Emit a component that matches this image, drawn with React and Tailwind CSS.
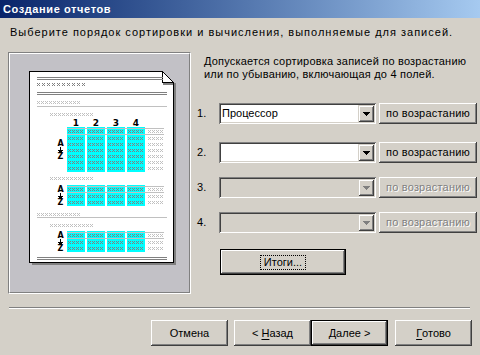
import React from "react";

const raised =
  "shadow-[inset_-1px_-1px_#404040,inset_1px_1px_#ffffff,inset_-2px_-2px_#808080,inset_2px_2px_#d4d0c8]";
const raisedDefault =
  "shadow-[inset_0_0_0_1px_#000000,inset_-2px_-2px_#404040,inset_2px_2px_#ffffff,inset_-3px_-3px_#808080,inset_3px_3px_#d4d0c8]";
const sunken =
  "shadow-[inset_1px_1px_#808080,inset_-1px_-1px_#ffffff,inset_2px_2px_#404040,inset_-2px_-2px_#d4d0c8]";
const ddBtn =
  "shadow-[inset_1px_1px_#d4d0c8,inset_-1px_-1px_#404040,inset_2px_2px_#ffffff,inset_-2px_-2px_#808080]";

function glyphs(x0, y0, n, pitch) {
  let d = "";
  for (let i = 0; i < n; i++) {
    const x = x0 + i * pitch;
    d += `M${x} ${y0}h1v1h-1zM${x + 2} ${y0}h1v1h-1zM${x + 1} ${y0 + 1}h1v1h-1zM${x} ${y0 + 2}h1v1h-1zM${x + 2} ${y0 + 2}h1v1h-1z`;
  }
  return d;
}

function Preview() {
  const cols = [67, 87, 107, 127];
  let dark = "";
  let light = "";
  let cyanX = "";
  const lines = [];
  const cyanRects = [];
  const icons = [];
  dark += glyphs(37, 83, 10, 5);
  light += glyphs(37, 101, 11, 4);
  light += glyphs(50, 113, 11, 4);
  light += glyphs(50, 177, 11, 4);
  light += glyphs(37, 213, 11, 4);
  light += glyphs(50, 224, 11, 4);
  const groups = [
    [127, 6],
    [185, 2],
    [231, 2],
  ];
  groups.forEach(([T, n]) => {
    const bottom = T + 14 + 6 * (n - 1);
    cols.forEach((cx) =>
      cyanRects.push({ x: cx, y: T, w: 18, h: bottom - T + 1 })
    );
    const rows = [T + 3];
    for (let k = 0; k < n; k++) rows.push(T + 10 + 6 * k);
    rows.forEach((ry) => {
      cols.forEach((cx) => {
        cyanX += glyphs(cx + 1, ry, 4, 4);
      });
      light += glyphs(148, ry, 4, 4);
    });
    lines.push({ x: 67, y: T + 1, w: 97, c: "#c0c0c0" });
    lines.push({ x: 67, y: T + 7, w: 97, c: "#c0c0c0" });
    icons.push(Math.round((T + bottom) / 2 - 9.5));
  });

  const darkLines = [
    { x: 37, y: 77, w: 126 },
    { x: 37, y: 79, w: 126 },
    { x: 37, y: 92, w: 130 },
    { x: 37, y: 94, w: 130 },
    { x: 37, y: 257, w: 130 },
    { x: 37, y: 259, w: 130 },
  ];
  const lightLines = [
    { x: 37, y: 106, w: 130 },
    { x: 37, y: 217, w: 130 },
  ];

  return (
    <svg
      width="179"
      height="238"
      viewBox="10 54 179 238"
      className="block"
    >
      <g shapeRendering="crispEdges">
        <rect x="174" y="83" width="2" height="182" fill="#808080" />
        <rect x="32" y="263" width="144" height="2" fill="#808080" />
        <path
          d="M29.5 71.5H162.5L173.5 82.5V262.5H29.5Z"
          fill="#ffffff"
          stroke="#000000"
          strokeWidth="1"
        />
        <rect x="163" y="83" width="10" height="2" fill="#808080" />
        <path
          d="M162.5 71.5V82.5H173.5Z"
          fill="#ffffff"
          stroke="#000000"
          strokeWidth="1"
        />
        {darkLines.map((l, i) => (
          <rect key={"d" + i} x={l.x} y={l.y} width={l.w} height="1" fill="#808080" />
        ))}
        {lightLines.map((l, i) => (
          <rect key={"l" + i} x={l.x} y={l.y} width={l.w} height="1" fill="#c0c0c0" />
        ))}
        {cyanRects.map((r, i) => (
          <rect key={"c" + i} x={r.x} y={r.y} width={r.w} height={r.h} fill="#00ffff" />
        ))}
        {lines.map((l, i) => (
          <rect key={"g" + i} x={l.x} y={l.y} width={l.w} height="1" fill={l.c} />
        ))}
        <path d={dark} fill="#808080" />
        <path d={light} fill="#c0c0c0" />
        <path d={cyanX} fill="#808080" />
        {icons.map((top, i) => (
          <g key={"i" + i}>
            <rect x="60" y={top + 7} width="1" height="4" fill="#000" />
            <path
              d={`M58 ${top + 10}h5v1h-1v1h-1v1h-1v-1h-1v-1h-1z`}
              fill="#000"
            />
          </g>
        ))}
      </g>
      {icons.map((top, i) => (
        <g key={"t" + i} fontFamily="'DejaVu Sans', sans-serif" fontWeight="bold" fontSize="8" textAnchor="middle" fill="#000">
          <text x="60.5" y={top + 6}>A</text>
          <text x="60.5" y={top + 19}>Z</text>
        </g>
      ))}
      <g fontFamily="'DejaVu Sans', sans-serif" fontWeight="bold" fontSize="9" textAnchor="middle" fill="#000">
        {cols.map((cx, i) => (
          <text key={i} x={cx + 9} y="126">
            {i + 1}
          </text>
        ))}
      </g>
    </svg>
  );
}

function Arrow({ color = "#000" }) {
  return (
    <svg width="7" height="4" viewBox="0 0 7 4" shapeRendering="crispEdges" className="block">
      <path d="M0 0h7v1h-1v1h-1v1h-1v1h-1v-1h-1v-1h-1v-1h-1z" fill={color} />
    </svg>
  );
}

function Combo({ text, disabled }) {
  return (
    <div
      className={`w-[157px] h-[21px] p-[2px] flex ${sunken} ${
        disabled ? "bg-[#d4d0c8]" : "bg-white"
      }`}
    >
      <div className="flex-1 flex items-center pl-[1px] whitespace-nowrap overflow-hidden">
        {text}
      </div>
      <div className={`w-[16px] flex items-center justify-center bg-[#d4d0c8] ${ddBtn}`}>
        <Arrow color={disabled ? "#808080" : "#000"} />
      </div>
    </div>
  );
}

function SortButton({ disabled }) {
  return (
    <div
      className={`ml-[3px] w-[98px] h-[21px] flex items-center justify-center whitespace-nowrap tracking-[0.2px] ${raised} ${
        disabled ? "text-[#808080] [text-shadow:1px_1px_0_#ffffff]" : ""
      }`}
    >
      по возрастанию
    </div>
  );
}

function SortRow({ n, text, disabled, className }) {
  return (
    <div className={`flex items-center ${className}`}>
      <div className="w-[22px]">{n}.</div>
      <Combo text={text} disabled={disabled} />
      <SortButton disabled={disabled} />
    </div>
  );
}

function Btn({ children, def, className = "" }) {
  return (
    <div
      className={`w-[77px] h-[26px] flex items-center justify-center whitespace-nowrap ${
        def ? raisedDefault : raised
      } ${className}`}
    >
      {children}
    </div>
  );
}

export default function App() {
  return (
    <div className="w-[480px] h-[355px] bg-[#d4d0c8] flex flex-col overflow-hidden text-[11px] leading-[13px] text-black [font-family:'Liberation_Sans',Arial,sans-serif] select-none">
      <div className="h-[18px] shrink-0 flex items-center pl-[3px] text-white font-bold tracking-[0.6px] bg-linear-to-r from-[#0a246a] to-[#a6caf0]">
        Создание отчетов
      </div>
      <div className="pl-[10px] pt-[8px] whitespace-nowrap tracking-[1px]">
        Выберите порядок сортировки и вычисления, выполняемые для записей.
      </div>
      <div className="flex mt-[13px]">
        <div className="ml-[8px] w-[183px] h-[242px] border border-t-[#808080] border-l-[#808080] border-r-white border-b-white">
          <div className="w-full h-full border border-t-white border-l-white border-r-[#808080] border-b-[#808080] bg-[#c2c1c6]">
            <Preview />
          </div>
        </div>
        <div className="ml-[6px] flex flex-col">
          <div className="pl-[7px] pt-[3px] tracking-[0.2px] whitespace-nowrap">
            <div>Допускается сортировка записей по возрастанию</div>
            <div>или по убыванию, включающая до 4 полей.</div>
          </div>
          <SortRow n={1} text="Процессор" className="mt-[22px]" />
          <SortRow n={2} text="" className="mt-[18px]" />
          <SortRow n={3} text="" disabled className="mt-[14px]" />
          <SortRow n={4} text="" disabled className="mt-[14px]" />
          <div
            className={`ml-[23px] mt-[16px] w-[126px] h-[26px] flex items-center justify-center ${raisedDefault}`}
          >
            <span className="px-[4px] py-[1px] outline outline-1 outline-dotted outline-black -outline-offset-1 leading-[13px]">
              Итоги...
            </span>
          </div>
        </div>
      </div>
      <div className="ml-[9px] mt-[13px] w-[461px] h-[2px] border-t border-t-[#808080] border-b border-b-white" />
      <div className="flex mt-[11px] pl-[151px]">
        <Btn>Отмена</Btn>
        <Btn className="ml-[6px]">
          &lt;&nbsp;<span className="underline underline-offset-2">Н</span>азад
        </Btn>
        <Btn def>
          <span className="underline underline-offset-2">Д</span>алее &gt;
        </Btn>
        <Btn className="ml-[7px]">
          <span className="underline underline-offset-2">Г</span>отово
        </Btn>
      </div>
    </div>
  );
}
